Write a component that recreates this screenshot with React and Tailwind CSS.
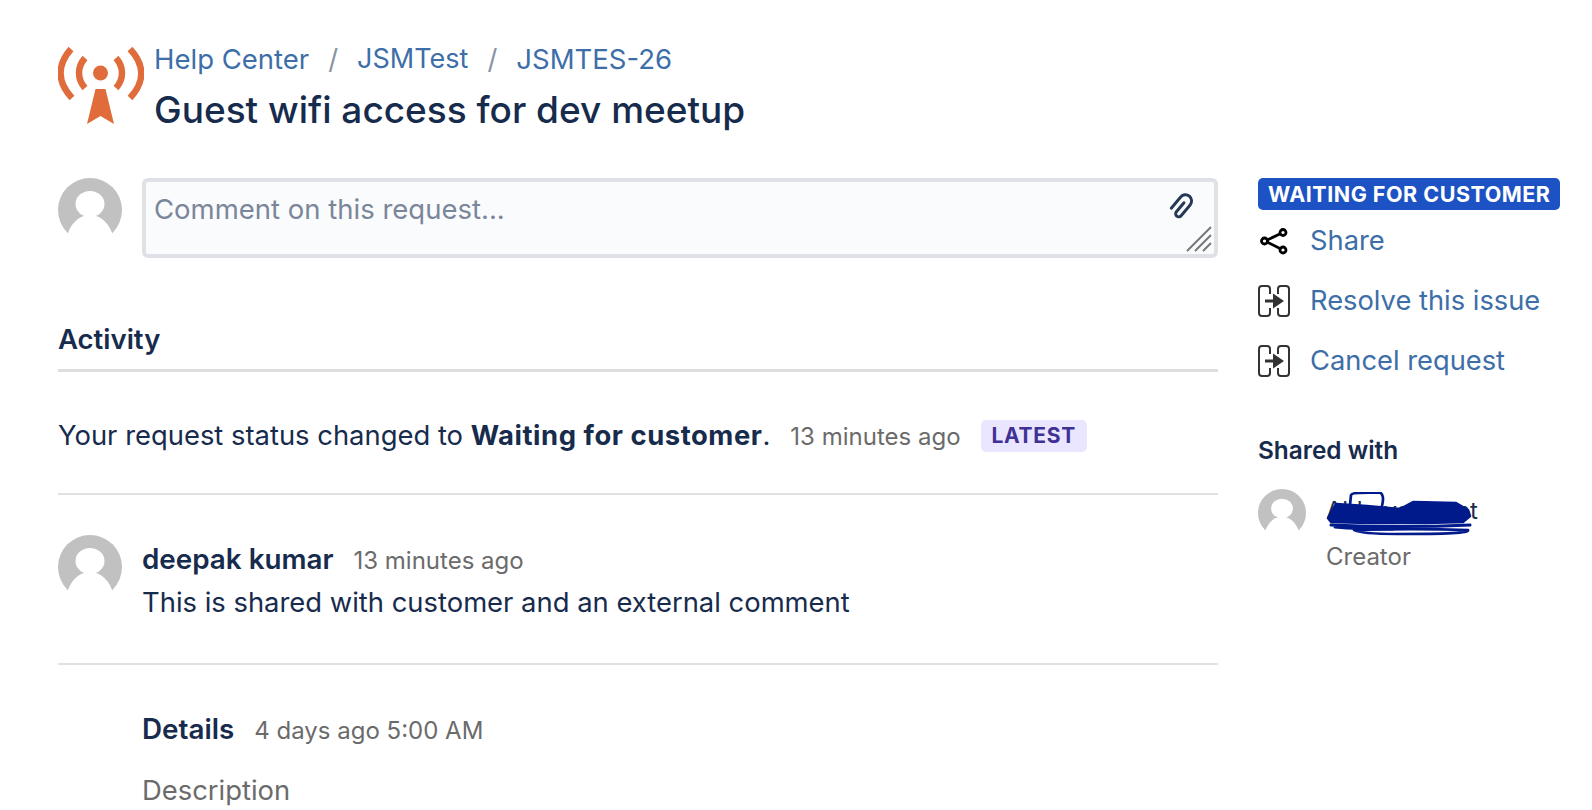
import React from 'react';

const font = "font-['Inter','Liberation_Sans',sans-serif]";

function Avatar({ size = 64 }) {
  return (
    <svg width={size} height={size} viewBox="0 0 64 64" className="shrink-0" aria-hidden="true">
      <circle cx="32" cy="32" r="32" fill="#c1c1c1" />
      <ellipse cx="32" cy="26" rx="14.5" ry="13" fill="#fff" />
      <path d="M9 58 C 12 47, 20 37, 32 37 C 44 37, 52 47, 55 58 L 55 64 L 9 64 Z" fill="#fff" />
    </svg>
  );
}

function TowerLogo() {
  return (
    <svg width="86" height="80" viewBox="0 0 86 80" className="mt-[3px] shrink-0" aria-hidden="true">
      <g fill="none" stroke="#df6c3a" strokeWidth="6.5">
        <path d="M13 3 C -1 19, -1 36, 14 52" />
        <path d="M72 3 C 87 19, 87 36, 72 52" />
        <path d="M27 12 C 19 21, 19 33, 27 42" />
        <path d="M58 12 C 66 21, 66 33, 58 42" />
      </g>
      <circle cx="42.5" cy="27" r="7.5" fill="#df6c3a" />
      <path d="M37.5 43 H47.5 L56 78 L42.5 70 L29 78 Z" fill="#df6c3a" />
    </svg>
  );
}

function ShareIcon() {
  return (
    <svg width="30" height="30" viewBox="0 0 30 30" aria-hidden="true" fill="none" stroke="#000" strokeWidth="2.8">
      <path d="M6 15 L24 6.5 M6 15 L24 24" />
      <circle cx="5.5" cy="15" r="3" fill="#fff" />
      <circle cx="24" cy="6.5" r="3" fill="#fff" />
      <circle cx="24" cy="24" r="3" fill="#fff" />
    </svg>
  );
}

function TransitionIcon() {
  return (
    <svg width="32" height="32" viewBox="0 0 32 32" aria-hidden="true" fill="none">
      <path d="M12 9 V4 A3 3 0 0 0 9 1 H4 A3 3 0 0 0 1 4 V28 A3 3 0 0 0 4 31 H9 A3 3 0 0 0 12 28 V23" stroke="#333" strokeWidth="2" />
      <path d="M20 9 V4 A3 3 0 0 1 23 1 H28 A3 3 0 0 1 31 4 V28 A3 3 0 0 1 28 31 H23 A3 3 0 0 1 20 28 V23" stroke="#333" strokeWidth="2" />
      <path d="M7 14.5 H15 V8.5 L26 16 L15 23.5 V17.5 H7 Z" fill="#333" />
    </svg>
  );
}

function PaperclipIcon() {
  return (
    <svg width="27" height="27" viewBox="0 0 24 24" aria-hidden="true" fill="none" stroke="#253858" strokeWidth="2.6" strokeLinecap="round">
      <path transform="rotate(40 12 12)" d="M11.5 8 V18.5 A2.7 2.7 0 0 0 17 18.5 V6 A5.5 5.5 0 0 0 6 6 V19" />
    </svg>
  );
}

function ResizeGrip() {
  return (
    <svg width="26" height="26" viewBox="0 0 26 26" className="absolute bottom-[2px] right-[2px]" aria-hidden="true" stroke="#777" strokeWidth="2">
      <path d="M1 25 L25 1 M9 25 L25 9 M17 25 L25 17" />
    </svg>
  );
}

function Scribble() {
  return (
    <svg width="152" height="44" viewBox="0 0 152 44" className="pointer-events-none absolute left-[1px] top-[3px]" aria-hidden="true" fill="none" stroke="#001a8c" strokeLinecap="round" strokeLinejoin="round">
      <path d="M23 13 L24 3 C 25 1, 28 1, 32 1 L 52 0.5 C 56 1, 57 6, 55 14" strokeWidth="2.7" />
      <path d="M1 26 L9 12 L40 14 L73 17 L86 10 L129 11 L141 18 L143 24 L136 30 L100 31 L40 31 L4 30 Z" fill="#001a8c" strokeWidth="2.5" />
      <path d="M4 33 C 50 35, 100 35, 143 33 M8 35 C 30 37, 50 37, 66 37" strokeWidth="3" />
      <path d="M27 38 C 60 37, 110 37, 141 38 C 143 41, 120 42, 70 42 C 50 42, 32 41, 27 38" strokeWidth="2.6" />
    </svg>
  );
}

function SideLink({ icon, children, className }) {
  return (
    <div className={`flex items-center gap-[20px] ${className}`}>
      <span className="flex w-[32px] justify-center">{icon}</span>
      <a className="text-[27.3px] leading-[32px] text-[#3d6ea8]">{children}</a>
    </div>
  );
}

export default function App() {
  return (
    <div className={`${font} h-[810px] w-[1592px] overflow-hidden bg-white px-[58px] pt-[43px] text-[#172b4d]`}>
      <header className="flex gap-[10px]">
        <TowerLogo />
        <div>
          <nav className="flex items-center text-[27.5px] leading-[32px] text-[#3d6ea8]">
            <a>Help Center</a>
            <span className="mx-[19px] text-[#8993a4]">/</span>
            <a className="text-[27px]">JSMTest</a>
            <span className="mx-[19px] text-[#8993a4]">/</span>
            <a>JSMTES-26</a>
          </nav>
          <h1 className="mt-[13px] text-[37px] font-medium leading-[44px]">Guest wifi access for dev meetup</h1>
        </div>
      </header>

      <div className="mt-[46px] flex gap-[40px]">
        <main className="w-[1160px] shrink-0">
          <div className="flex gap-[20px]">
            <Avatar />
            <div className="relative h-[80px] flex-1 rounded-[6px] border-[4px] border-[#dfe1e6] bg-[#fafbfc] px-[8px] py-[11px] text-[27.5px] leading-[32px] text-[#7a869a]">
              Comment on this request...
              <span className="absolute right-[19px] top-[11px]"><PaperclipIcon /></span>
              <ResizeGrip />
            </div>
          </div>

          <h2 className="mt-[65px] border-b-[3px] border-[#dedede] pb-[14px] text-[27.5px] font-semibold leading-[32px]">Activity</h2>

          <div className="flex items-center border-b-2 border-[#e1e1e1] pb-[40px] pt-[47px]">
            <p className="mb-[2px] text-[27.4px] leading-[32px]">Your request status changed to <strong className="font-bold tracking-[0.02em]">Waiting for customer</strong>.</p>
            <span className="ml-[20px] mt-[2px] text-[24px] leading-[32px] text-[#6b6b6b]">13 minutes ago</span>
            <span className="ml-[20px] rounded-[5px] bg-[#eae6ff] px-[11px] py-[1px] text-[21px] font-bold leading-[30px] tracking-[0.7px] text-[#403294]">LATEST</span>
          </div>

          <div className="flex gap-[20px] border-b-2 border-[#e1e1e1] pb-[45px] pt-[40px]">
            <Avatar />
            <div className="pt-[6px]">
              <div className="flex items-baseline gap-[20px]">
                <span className="text-[27.8px] font-semibold leading-[36px]">deepak kumar</span>
                <span className="text-[24px] leading-[36px] text-[#6b6b6b]">13 minutes ago</span>
              </div>
              <p className="mt-[7px] text-[27.4px] leading-[32px]">This is shared with customer and an external comment</p>
            </div>
          </div>

          <div className="pl-[84px] pt-[46px]">
            <div className="flex items-baseline gap-[20px]">
              <h3 className="text-[27.8px] font-semibold leading-[36px]">Details</h3>
              <span className="text-[24px] leading-[36px] text-[#6b6b6b]">4 days ago 5:00 AM</span>
            </div>
            <p className="mt-[25px] text-[27.4px] leading-[32px] text-[#6b6b6b]">Description</p>
          </div>
        </main>

        <aside className="flex-1">
          <span className="inline-block whitespace-nowrap rounded-[5px] bg-[#1d52c4] px-[10px] text-[21.5px] font-bold leading-[32px] tracking-[0.5px] text-white">WAITING FOR CUSTOMER</span>
          <SideLink icon={<ShareIcon />} className="mt-[15px]">Share</SideLink>
          <SideLink icon={<TransitionIcon />} className="mt-[28px]">Resolve this issue</SideLink>
          <SideLink icon={<TransitionIcon />} className="mt-[28px]">Cancel request</SideLink>
          <h4 className="mt-[57px] text-[24.4px] font-semibold leading-[32px]">Shared with</h4>
          <div className="mt-[23px] flex gap-[20px]">
            <Avatar size={48} />
            <div>
              <div className="relative h-[52px] w-[152px] whitespace-nowrap text-[24px] leading-[44px] tracking-[-0.25px]">
                Abhaya Grant
                <Scribble />
              </div>
              <p className="text-[24px] leading-[32px] text-[#6b6b6b]">Creator</p>
            </div>
          </div>
        </aside>
      </div>
    </div>
  );
}
